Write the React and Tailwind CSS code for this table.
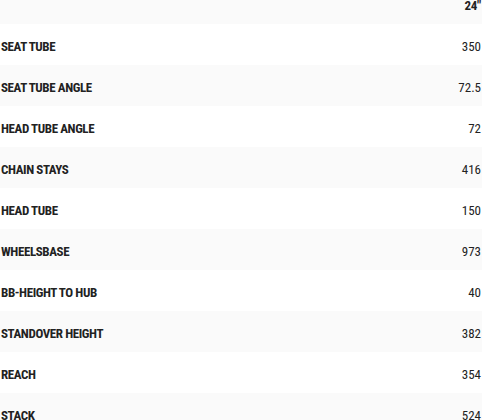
import React from 'react';

const rows = [
  ['SEAT TUBE', '350'],
  ['SEAT TUBE ANGLE', '72.5'],
  ['HEAD TUBE ANGLE', '72'],
  ['CHAIN STAYS', '416'],
  ['HEAD TUBE', '150'],
  ['WHEELSBASE', '973'],
  ['BB-HEIGHT TO HUB', '40'],
  ['STANDOVER HEIGHT', '382'],
  ['REACH', '354'],
  ['STACK', '524'],
];

export default function App() {
  return (
    <div className="w-[482px] h-[420px] overflow-hidden bg-white text-[#222] font-['Roboto_Condensed','Liberation_Sans_Narrow',Roboto,sans-serif] text-[13px]">
      <div className="h-[24px] bg-[#fafafa] flex items-start justify-end pr-px">
        <span className="font-bold leading-none -mt-px tracking-[-0.3px]">24"</span>
      </div>
      {rows.map(([label, value], i) => (
        <div key={label} className={`h-[41px] flex items-center justify-between px-px pt-[4px] ${i % 2 ? 'bg-[#fafafa]' : 'bg-white'}`}>
          <span className="font-bold tracking-[-0.4px]">{label}</span>
          <span>{value}</span>
        </div>
      ))}
    </div>
  );
}
